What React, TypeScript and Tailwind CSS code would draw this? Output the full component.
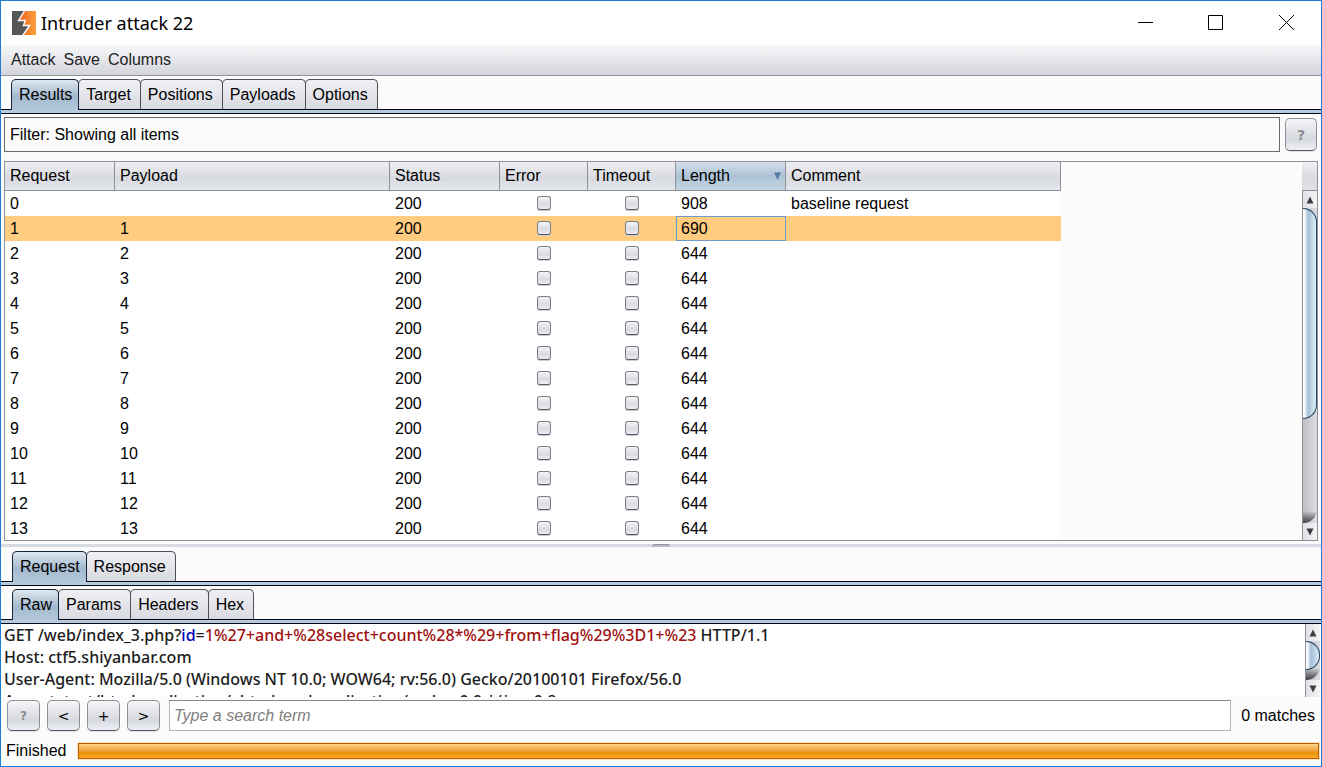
import { useState } from 'react'
import clsx from 'clsx'

type Result = { payload: string; status: number; length: number; comment?: string }

const results: Result[] = [
  { payload: '', status: 200, length: 908, comment: 'baseline request' },
  { payload: '1', status: 200, length: 690 },
  ...Array.from({ length: 12 }, (_, i) => ({ payload: String(i + 2), status: 200, length: 644 })),
]

const columns = [
  { name: 'Request', width: 'w-[110px]' },
  { name: 'Payload', width: 'w-[275px]' },
  { name: 'Status', width: 'w-[110px]' },
  { name: 'Error', width: 'w-[88px]' },
  { name: 'Timeout', width: 'w-[88px]' },
  { name: 'Length', width: 'w-[110px]' },
  { name: 'Comment', width: 'w-[275px]' },
]

const buttonLook =
  'shrink-0 rounded-[5px] border border-[#8d9099] border-b-[#4f535c] bg-linear-to-b from-[#f6f6f8] via-[#d6d8df] via-65% to-[#f0f1f7] text-center font-["DejaVu_Sans"] shadow-[0_1px_0_#e2e3e6]'

function Logo() {
  return (
    <svg viewBox="0 0 24 24" className="h-6 w-6" aria-hidden="true">
      <defs>
        <linearGradient id="flame" x1="0" x2="1">
          <stop offset="0.4" stopColor="#ee6c25" />
          <stop offset="1" stopColor="#ffa13b" />
        </linearGradient>
      </defs>
      <rect width="24" height="24" fill="url(#flame)" />
      <path d="M0 0H12L6 9.500L13 10.500L11.500 15L17 15L11 24H0Z" fill="#555658" />
      <path d="M12.500 0L6.500 9.500L13.300 9.500L11.500 14.500L17.800 14.500L11 24" fill="none" stroke="#fff" strokeWidth="1.400" />
    </svg>
  )
}

function Tabs({ names, inset }: { names: string[]; inset: string }) {
  const [active, setActive] = useState(names[0])
  return (
    <div className="shrink-0">
      <div role="tablist" className={clsx('flex h-[30px]', inset)}>
        {names.map(name => (
          <button
            key={name}
            role="tab"
            aria-selected={name === active}
            onClick={() => setActive(name)}
            className={clsx(
              '-ml-px rounded-t-[5px] border border-b-0 pl-[7px]',
              name === active
                ? 'relative h-[31px] border-[#16263a] bg-linear-to-b from-[#dfe8ee] via-[#a3b9ce] via-55% to-[#b3c9da] pr-[6px] pb-px'
                : 'h-[30px] border-[#4c4f58] bg-linear-to-b from-[#f0f0f3] to-[#d8dae1] pr-[9px]'
            )}
          >
            {name}
          </button>
        ))}
      </div>
      <div className="h-[5px] border-y border-[#000814] bg-[#b6cadd]" />
    </div>
  )
}

function Arrow({ down }: { down?: boolean }) {
  return (
    <span className="flex h-[17px] w-full shrink-0 items-center justify-center bg-linear-to-r from-[#e0e1e4] to-[#f4f4f6]">
      <svg viewBox="0 0 8 8" className="h-2 w-2" aria-hidden="true">
        <path d={down ? 'M0.500 0.500H7.500L4 7.500Z' : 'M0.500 7.500H7.500L4 0.500Z'} fill="#3c3d40" />
      </svg>
    </span>
  )
}

function ScrollBar({ size }: { size: number }) {
  return (
    <div className="flex min-h-0 w-[15px] flex-1 flex-col border-l border-[#8f929b]">
      <Arrow />
      <div className="min-h-0 flex-1 bg-linear-to-r from-[#bfc0c6] to-[#dcdde2]">
        <div className="h-full rounded-br-2xl bg-linear-to-t from-[#3c3d40] to-transparent to-[12px]">
          <div
            className="rounded-r-2xl border border-l-0 border-[#24405c] bg-linear-to-r from-[#fafcfd] from-10% via-[#a6bfd6] via-40% to-[#def0fa]"
            style={{ height: `${size}%` }}
          />
        </div>
      </div>
      <Arrow down />
    </div>
  )
}

function TitleBar() {
  return (
    <header className="flex h-11 shrink-0 items-center bg-white pb-px pl-[11px]">
      <Logo />
      <h1 className="ml-[5px] flex-1 font-['Noto_Sans',sans-serif] text-lg">Intruder attack 22</h1>
      <button aria-label="Minimize" className="flex h-full w-[70px] items-center justify-center pr-px">
        <svg viewBox="0 0 15 15" className="h-[15px] w-[15px]"><path d="M0 7.500H15" stroke="#000" /></svg>
      </button>
      <button aria-label="Maximize" className="flex h-full w-[70px] items-center justify-center pr-px">
        <svg viewBox="0 0 15 15" className="h-[15px] w-[15px]"><path d="M0.500 0.500H14.500V14.500H0.500Z" fill="none" stroke="#000" /></svg>
      </button>
      <button aria-label="Close" className="flex h-full w-[70px] items-center justify-center pl-px">
        <svg viewBox="0 0 15 15" className="h-[15px] w-[15px]"><path d="M0 0L15 15M15 0L0 15" stroke="#000" /></svg>
      </button>
    </header>
  )
}

function ResultsTable() {
  const [selected, setSelected] = useState(1)
  return (
    <div className="mx-[3px] flex min-h-0 flex-1 border border-[#8f929b]">
      <div className="min-w-0 flex-1 overflow-hidden">
        <table className="w-[1056px] table-fixed border-separate border-spacing-0 bg-white text-left">
          <thead>
            <tr className="h-[29px]">
              {columns.map(c => (
                <th
                  key={c.name}
                  className={clsx(
                    'border-r border-b border-[#8f929b] bg-linear-to-b pb-px pl-[5px] font-normal',
                    c.width,
                    c.name === 'Length' ? 'from-[#d3e0ea] via-[#adc3d5] to-[#c2d5e4]' : 'from-[#efeff1] via-[#d8dae0] via-60% to-[#e6e8f0]'
                  )}
                >
                  {c.name === 'Length' ? (
                    <span className="flex items-center justify-between pr-1">
                      {c.name}
                      <svg viewBox="0 0 7 8" className="h-2 w-[7px]" aria-hidden="true"><path d="M0 0.500H7L3.500 8Z" fill="#557da6" /></svg>
                    </span>
                  ) : c.name}
                </th>
              ))}
            </tr>
          </thead>
          <tbody>
            {results.map((r, i) => (
              <tr key={i} onClick={() => setSelected(i)} className={clsx('h-[25px]', i === selected && 'bg-[#ffcc80]')}>
                <td className="pl-[5px]">{i}</td>
                <td className="pl-[5px]">{r.payload}</td>
                <td className="pl-[5px]">{r.status}</td>
                {['Error', 'Timeout'].map(kind => (
                  <td key={kind} className="p-0 pb-px">
                    <input
                      type="checkbox"
                      aria-label={`${kind} ${i}`}
                      className="mx-auto block h-[14px] w-[14px] appearance-none rounded-[3px] border border-[#7d808a] border-b-[#565a64] bg-linear-to-b from-[#f5f5f6] via-[#d9dbe1] via-60% to-[#eceef4] shadow-[0_1px_0_#c9cbd0]"
                    />
                  </td>
                ))}
                <td className={clsx('pl-[5px]', i === selected && 'outline -outline-offset-1 outline-[#6f9bc8]')}>{r.length}</td>
                <td className="pl-[5px]">{r.comment}</td>
              </tr>
            ))}
          </tbody>
        </table>
      </div>
      <div className="flex flex-col">
        <div className="h-[29px] shrink-0 border-b border-[#8f929b] bg-linear-to-b from-[#f1f1f3] via-[#d9dbe1] to-[#dfe1e7]" />
        <ScrollBar size={67} />
      </div>
    </div>
  )
}

function RawRequest() {
  return (
    <div className="flex h-[73px] shrink-0 bg-white">
      <pre className="min-w-0 flex-1 overflow-hidden pl-[3px] font-['Noto_Sans',sans-serif] text-base leading-[22px] font-medium text-[#1c1c1c]">
        GET /web/index_3.php?<span className="text-[#0000b8]">id</span>=<span className="text-[#a01010]">1%27+and+%28select+count%28*%29+from+flag%29%3D1+%23</span> HTTP/1.1{'\n'}
        Host: ctf5.shiyanbar.com{'\n'}
        User-Agent: Mozilla/5.0 (Windows NT 10.0; WOW64; rv:56.0) Gecko/20100101 Firefox/56.0{'\n'}
        Accept: text/html,application/xhtml+xml,application/xml;q=0.9,*/*;q=0.8
      </pre>
      <div className="mr-px flex flex-col">
        <ScrollBar size={75} />
      </div>
    </div>
  )
}

export default function App() {
  return (
    <div className="flex h-screen flex-col overflow-hidden border border-[#1a7fd4] bg-[#fbfbfb] font-['Liberation_Sans',Arial,sans-serif] text-base leading-6 text-black">
      <TitleBar />
      <nav className="flex h-[31px] shrink-0 items-center gap-2 border-b border-[#8f929b] bg-linear-to-b from-[#f7f7f7] via-[#e9eaee] via-40% to-[#d3d5dc] pl-[10px] text-[#232323]">
        <button>Attack</button>
        <button>Save</button>
        <button>Columns</button>
      </nav>
      <div className="h-[3px] shrink-0" />
      <Tabs names={['Results', 'Target', 'Positions', 'Payloads', 'Options']} inset="pl-[11px]" />

      <div className="flex shrink-0 items-center gap-[5px] py-[3px] pr-1 pl-[3px]">
        <button className="h-[35px] flex-1 border border-[#696a6e] pl-[5px] text-left">Filter: Showing all items</button>
        <button aria-label="Help" className={clsx(buttonLook, 'h-[33px] w-8 text-sm font-bold text-[#888a8e]')}>?</button>
      </div>
      <div className="h-[6px] shrink-0" />
      <ResultsTable />

      <div className="my-[3px] flex h-[3px] shrink-0 justify-center bg-[#d8dae1]">
        <div className="w-[18px] rounded-t-sm border-t border-[#8f929b] bg-[#b9bcc4]" />
      </div>
      <div className="h-px shrink-0" />
      <Tabs names={['Request', 'Response']} inset="pl-3" />
      <div className="h-[3px] shrink-0" />
      <Tabs names={['Raw', 'Params', 'Headers', 'Hex']} inset="pl-3" />
      <RawRequest />

      <div className="flex shrink-0 items-center gap-[7px] pt-[3px] pr-[6px] pl-[6px]">
        <button aria-label="Help" className={clsx(buttonLook, 'h-[31px] w-[33px] text-xs font-bold text-[#888a8e]')}>?</button>
        <button aria-label="Previous match" className={clsx(buttonLook, 'h-[31px] w-[33px] text-sm')}>&lt;</button>
        <button aria-label="Add" className={clsx(buttonLook, 'h-[31px] w-[33px] text-sm')}>+</button>
        <button aria-label="Next match" className={clsx(buttonLook, 'h-[31px] w-[33px] text-sm')}>&gt;</button>
        <input
          type="text"
          aria-label="Search"
          placeholder="Type a search term"
          className="ml-[2px] h-[31px] min-w-0 flex-1 border border-[#b4b5b8] border-t-[#86878a] bg-white px-1 placeholder:text-[#808080] placeholder:italic"
        />
        <span className="ml-[3px]">0 matches</span>
      </div>
      <footer className="flex h-[35px] shrink-0 items-center gap-3 pt-1 pr-[2px] pl-[5px]">
        <span>Finished</span>
        <div
          role="progressbar"
          aria-label="Finished"
          aria-valuenow={100}
          className="h-4 flex-1 border border-[#b85c08] bg-linear-to-b from-[#ffd587] via-[#e88f00] via-65% to-[#ffad2c] shadow-[0_0_0_1px_#fbe0bd]"
        />
      </footer>
    </div>
  )
}
